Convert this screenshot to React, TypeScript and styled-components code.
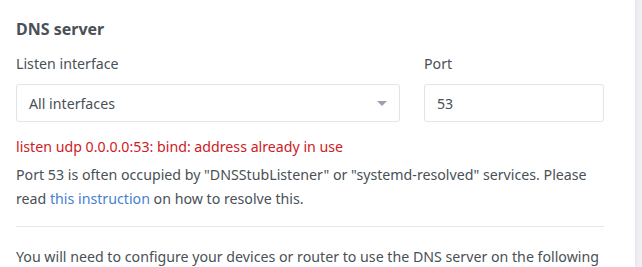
import React from "react";
import styled, { createGlobalStyle } from "styled-components";

const Global = createGlobalStyle`
  html, body { margin: 0; padding: 0; }
  body {
    background: #f0f0f4;
    font-family: "Noto Sans", "Open Sans", sans-serif;
    color: #495057;
    overflow: hidden;
  }
`;

const Card = styled.div`
  width: 635px;
  height: 267px;
  box-sizing: border-box;
  background: #fff;
  padding: 16px 31px 0 16px;
  box-shadow: 1px 0 4px rgba(0, 0, 0, 0.06);
  overflow: hidden;
`;

const Title = styled.h2`
  margin: 0 0 10px;
  font-size: 16px;
  font-weight: 700;
  line-height: 26px;
  color: #495057;
`;

const Row = styled.div`
  display: grid;
  grid-template-columns: 384px 180px;
  column-gap: 24px;
`;

const Field = styled.div`
  display: flex;
  flex-direction: column;
`;

const Label = styled.label`
  font-size: 14.2px;
  line-height: 24px;
  margin-bottom: 8px;
`;

const Box = styled.div`
  box-sizing: border-box;
  height: 38px;
  border: 1px solid #e0e5ec;
  border-radius: 3px;
  display: flex;
  align-items: center;
  justify-content: space-between;
  padding: 0 12px 0 12px;
  font-size: 14.2px;
  color: #495057;
`;

const Caret = styled.span`
  width: 0;
  height: 0;
  border-left: 5px solid transparent;
  border-right: 5px solid transparent;
  border-top: 5px solid #9aa0ac;
`;

const ErrorText = styled.div`
  margin-top: 13px;
  font-size: 14.2px;
  line-height: 24px;
  color: #cd201f;
`;

const Para = styled.p`
  margin: 4px 0 0;
  font-size: 14.2px;
  line-height: 24px;
`;

const Link = styled.a`
  color: #467fcf;
  text-decoration: none;
`;

const Rule = styled.hr`
  border: 0;
  border-top: 1px solid #e3e7ee;
  margin: 15px 0 18px;
  width: 588px;
`;

export default function App() {
  return (
    <>
      <Global />
      <Card>
        <Title>DNS server</Title>
        <Row>
          <Field>
            <Label>Listen interface</Label>
            <Box>
              All interfaces
              <Caret />
            </Box>
          </Field>
          <Field>
            <Label>Port</Label>
            <Box>53</Box>
          </Field>
        </Row>
        <ErrorText>listen udp 0.0.0.0:53: bind: address already in use</ErrorText>
        <Para>
          Port 53 is often occupied by "DNSStubListener" or "systemd-resolved" services. Please
          read <Link href="#">this instruction</Link> on how to resolve this.
        </Para>
        <Rule />
        <Para>
          You will need to configure your devices or router to use the DNS server on the following
          addresses:
        </Para>
      </Card>
    </>
  );
}
